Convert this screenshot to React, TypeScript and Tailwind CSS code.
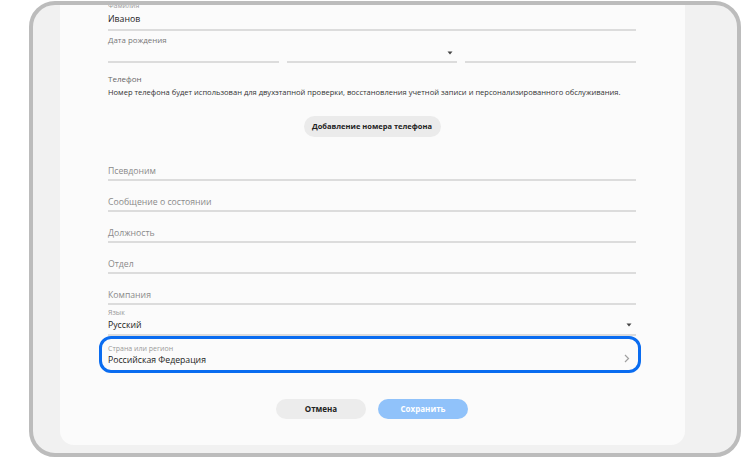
import React from "react";

const font = { fontFamily: '"Open Sans", "Noto Sans", sans-serif' };

function Line() {
  return <div className="h-[2px] bg-[#dcdcdc]" />;
}

function Field({ text }: { text: string }) {
  return (
    <div className="pt-[14px]">
      <div className="text-[8.7px] leading-[14px] text-[#8a8a8a]">{text}</div>
      <div className="pt-[1px]">
        <Line />
      </div>
    </div>
  );
}

function Caret() {
  return (
    <svg width="6" height="4" viewBox="0 0 6 4">
      <path d="M0.5 0.5h5L3 3.5z" fill="#444" />
    </svg>
  );
}

export default function App() {
  return (
    <div className="w-[752px] h-[458px] bg-white overflow-hidden pt-[1px]" style={font}>
      <div className="ml-[29px] w-[712px] h-[456px] border-4 border-[#bcbcbc] rounded-[26px] bg-[#f1f1f1] overflow-hidden">
        <div className="ml-[27px] w-[625px] h-[440px] bg-[#fbfbfb] rounded-b-[14px] pl-[48px] flex flex-col">
          <div className="w-[528px] -mt-[5px] flex flex-col">
            {/* Фамилия */}
            <div className="text-[7px] leading-[12px] text-[#9a9a9a]">Фамилия</div>
            <div className="text-[8.7px] leading-[14px] text-[#222]">Иванов</div>
            <div className="mt-[3px]">
              <Line />
            </div>

            {/* Дата рождения */}
            <div className="mt-[3px] text-[7.9px] leading-[12px] text-[#777]">Дата рождения</div>
            <div className="grid grid-cols-3 gap-[8px]">
              <div className="h-[17px] flex flex-col justify-end">
                <Line />
              </div>
              <div className="h-[17px] flex flex-col justify-end">
                <div className="flex justify-end pr-[4px] pb-[6px]">
                  <Caret />
                </div>
                <Line />
              </div>
              <div className="h-[17px] flex flex-col justify-end">
                <Line />
              </div>
            </div>

            {/* Телефон */}
            <div className="mt-[10px] text-[8px] leading-[12px] text-[#666]">Телефон</div>
            <div className="mt-[1px] text-[7.55px] leading-[12px] text-[#333] whitespace-nowrap">
              Номер телефона будет использован для двухэтапной проверки, восстановления учетной записи и персонализированного обслуживания.
            </div>
            <div className="mt-[18px] flex justify-center">
              <button className="h-[21px] w-[137px] rounded-full bg-[#ebebeb] text-[7.5px] font-bold text-[#222]">
                Добавление номера телефона
              </button>
            </div>

            <div className="pt-[13px]">
              <Field text="Псевдоним" />
            </div>
            <Field text="Сообщение о состоянии" />
            <Field text="Должность" />
            <Field text="Отдел" />
            <Field text="Компания" />

            {/* Язык */}
            <div className="mt-[2px] text-[7px] leading-[12px] text-[#9a9a9a]">Язык</div>
            <div className="-mt-[1px] flex items-center justify-between pr-[4px]">
              <span className="text-[8.7px] leading-[14px] text-[#222]">Русский</span>
              <Caret />
            </div>
            <div className="mt-[2px]">
              <Line />
            </div>

            {/* Страна или регион */}
            <div className="-ml-[9px] w-[542px] h-[37px] border-[3px] border-[#0a6cf0] rounded-[12px] pl-[6px] pr-[8px] flex items-center">
              <div className="flex-1">
                <div className="mt-[1px] text-[7px] leading-[12px] text-[#9a9a9a]">Страна или регион</div>
                <div className="-mt-[2px] text-[8.7px] leading-[14px] text-[#222]">Российская Федерация</div>
              </div>
              <svg width="6" height="9" viewBox="0 0 6 9" className="mt-[8px]">
                <path d="M1 1l3.5 3.5L1 8" fill="none" stroke="#a0a0a0" strokeWidth="1.2" />
              </svg>
            </div>

            <div className="mt-[26px] flex justify-center gap-[12px]">
              <button className="h-[20px] w-[90px] rounded-full bg-[#ececec] text-[8px] font-bold text-[#222]">
                Отмена
              </button>
              <button className="h-[20px] w-[90px] rounded-full bg-[#90c2fa] text-[8px] font-bold text-white">
                Сохранить
              </button>
            </div>
          </div>
        </div>
      </div>
    </div>
  );
}
